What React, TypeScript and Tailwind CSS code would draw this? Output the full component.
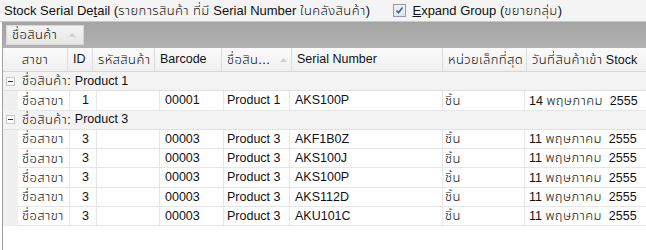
import React from "react";

const font = {
  fontFamily:
    '"Liberation Sans", "Noto Sans Thai UI", "Noto Sans Thai", "Noto Looped Thai", Loma, Garuda, Waree, "TlwgTypo", Tahoma, sans-serif',
};

function Th({ children }: { children: React.ReactNode }) {
  return <span className="text-[13px] tracking-[0.4px] font-light">{children}</span>;
}

const cols: { label: React.ReactNode; w: number; align: string; sort?: boolean }[] = [
  { label: <Th>สาขา</Th>, w: 65, align: "center" },
  { label: "ID", w: 25, align: "left" },
  { label: <Th>รหัสสินค้า</Th>, w: 62, align: "left" },
  { label: "Barcode", w: 67, align: "left" },
  { label: <Th>ชื่อสิน...</Th>, w: 70, align: "left", sort: true },
  { label: "Serial Number", w: 151, align: "left" },
  { label: <Th>หน่วยเล็กที่สุด</Th>, w: 84, align: "left" },
  { label: <span><Th>วันที่สินค้าเข้า</Th> Stock</span>, w: 120, align: "left" },
];

type Row = { id: string; code: string; name: string; serial: string; day: string };
const groups: { name: string; rows: Row[] }[] = [
  { name: "Product 1", rows: [{ id: "1", code: "00001", name: "Product 1", serial: "AKS100P", day: "14" }] },
  {
    name: "Product 3",
    rows: [
      { id: "3", code: "00003", name: "Product 3", serial: "AKF1B0Z", day: "11" },
      { id: "3", code: "00003", name: "Product 3", serial: "AKS100J", day: "11" },
      { id: "3", code: "00003", name: "Product 3", serial: "AKS100P", day: "11" },
      { id: "3", code: "00003", name: "Product 3", serial: "AKS112D", day: "11" },
      { id: "3", code: "00003", name: "Product 3", serial: "AKU101C", day: "11" },
    ],
  },
];

function DataRow({ r }: { r: Row }) {
  return (
    <div className="flex h-[19.3px] items-center text-[12.5px] text-[#111]">
      <div className="w-[15px] h-full bg-[#f0f0f0]" />
      <div className="w-[52px] h-full flex items-center pl-[4px] border-r border-[#e6e6e6] border-b whitespace-nowrap"><Th>ชื่อสาขา</Th></div>
      <div className="w-[27px] h-full flex items-center justify-end pr-[7px] border-r border-b border-[#e6e6e6]">{r.id}</div>
      <div className="w-[63px] h-full border-r border-b border-[#e6e6e6]" />
      <div className="w-[64px] h-full flex items-center pl-[5px] border-r border-b border-[#e6e6e6]">{r.code}</div>
      <div className="w-[66px] h-full flex items-center pl-[3px] border-r border-b border-[#e6e6e6]">{r.name}</div>
      <div className="w-[153px] h-full flex items-center pl-[5px] border-r border-b border-[#e6e6e6]">{r.serial}</div>
      <div className="w-[82px] h-full flex items-center pl-[2px] border-r border-b border-[#e6e6e6]"><Th>ชิ้น</Th></div>
      <div className="flex-1 h-full flex items-center pl-[4px] border-b border-[#e6e6e6]">
        <span className="whitespace-pre">{r.day} <Th>พฤษภาคม</Th>  2555</span>
      </div>
    </div>
  );
}

function GroupRow({ name }: { name: string }) {
  return (
    <div className="flex h-[19.3px] items-center bg-[#f3f3f3] border-b border-[#e2e2e2] text-[12.5px] text-[#111]">
      <div className="w-[15px] flex items-center justify-center">
        <div className="w-[9px] h-[9px] bg-white border border-[#c8c8c8] flex items-center justify-center">
          <div className="w-[5px] h-[1px] bg-[#333]" />
        </div>
      </div>
      <span className="ml-[4px]"><Th>ชื่อสินค้า</Th>:</span>
      <span className="ml-[4px]">{name}</span>
    </div>
  );
}

export default function App() {
  return (
    <div className="w-[646px] h-[250px] bg-white overflow-hidden flex flex-col" style={font}>
      <div className="h-[22px] bg-[#f4f4f4] flex items-center text-[13px] text-[#111] border-b border-[#c8c8c8]">
        <span className="ml-[4px] whitespace-nowrap">
          Stock Serial De<span className="underline">t</span>ail (<Th>รายการสินค้า ที่มี</Th> Serial Number <Th>ในคลังสินค้า</Th>)
        </span>
        <div className="ml-auto mr-[84px] flex items-center">
          <div className="w-[13px] h-[13px] border border-[#8e9aa8] bg-gradient-to-b from-[#f0f4f8] to-[#dde4ec] flex items-center justify-center">
            <svg width="9" height="9" viewBox="0 0 9 9">
              <path d="M1.5 4.5 L3.5 6.8 L7.5 1.5" stroke="#4a5b8c" strokeWidth="1.6" fill="none" />
            </svg>
          </div>
          <span className="ml-[6px] whitespace-nowrap">
            <span className="underline">E</span>xpand Group (<Th>ขยายกลุ่ม</Th>)
          </span>
        </div>
      </div>
      <div className="flex-1 flex flex-col border-l border-[#a0a0a0] ml-[2px]">
        <div className="h-[26px] bg-gradient-to-b from-[#a4a4a4] to-[#b2b2b2] flex items-center pl-[3px]">
          <div className="w-[78px] h-[20px] bg-gradient-to-b from-[#f4f4f4] to-[#e6e6e6] border border-[#d8d8d8] flex items-center pl-[5px] text-[12.5px] text-[#111]">
            <Th>ชื่อสินค้า</Th>
            <svg className="ml-[12px]" width="7" height="4" viewBox="0 0 7 4">
              <path d="M0 4 L3.5 0 L7 4Z" fill="#d0d0d0" />
            </svg>
          </div>
        </div>
        <div className="h-[24px] flex bg-[#f7f7f7] border-b border-[#d5d5d5] text-[12.5px] text-[#111]">
          {cols.map((c, i) => (
            <div
              key={i}
              className={`h-full flex items-center whitespace-nowrap overflow-hidden border-r border-[#dcdcdc] bg-gradient-to-b from-[#fbfbfb] to-[#f0f0f0] ${
                c.align === "center" ? "justify-center" : "pl-[5px]"
              } ${i === cols.length - 1 ? "flex-1 border-r-0" : ""}`}
              style={i === cols.length - 1 ? undefined : { width: c.w }}
            >
              {c.label}
              {c.sort && (
                <svg className="ml-[10px]" width="7" height="4" viewBox="0 0 7 4">
                  <path d="M0 4 L3.5 0 L7 4Z" fill="#d0d0d0" />
                </svg>
              )}
            </div>
          ))}
        </div>
        {groups.map((g) => (
          <React.Fragment key={g.name}>
            <GroupRow name={g.name} />
            {g.rows.map((r, i) => (
              <DataRow key={i} r={r} />
            ))}
          </React.Fragment>
        ))}
      </div>
    </div>
  );
}
